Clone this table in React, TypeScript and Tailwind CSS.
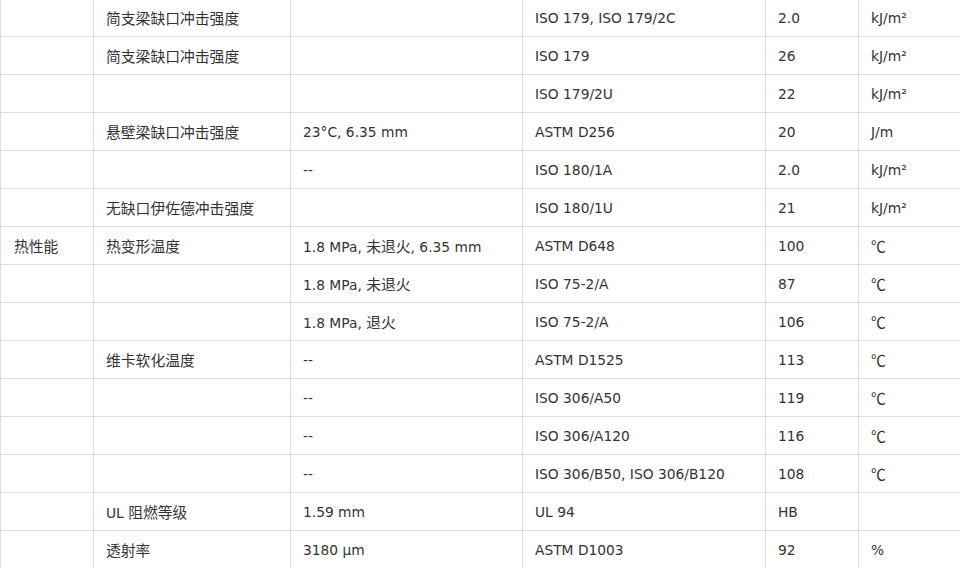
import React from 'react';

const rows: string[][] = [
  ['', '简支梁缺口冲击强度', '', 'ISO 179, ISO 179/2C', '2.0', 'kJ/m²'],
  ['', '简支梁缺口冲击强度', '', 'ISO 179', '26', 'kJ/m²'],
  ['', '', '', 'ISO 179/2U', '22', 'kJ/m²'],
  ['', '悬壁梁缺口冲击强度', '23°C, 6.35 mm', 'ASTM D256', '20', 'J/m'],
  ['', '', '--', 'ISO 180/1A', '2.0', 'kJ/m²'],
  ['', '无缺口伊佐德冲击强度', '', 'ISO 180/1U', '21', 'kJ/m²'],
  ['热性能', '热变形温度', '1.8 MPa, 未退火, 6.35 mm', 'ASTM D648', '100', '℃'],
  ['', '', '1.8 MPa, 未退火', 'ISO 75-2/A', '87', '℃'],
  ['', '', '1.8 MPa, 退火', 'ISO 75-2/A', '106', '℃'],
  ['', '维卡软化温度', '--', 'ASTM D1525', '113', '℃'],
  ['', '', '--', 'ISO 306/A50', '119', '℃'],
  ['', '', '--', 'ISO 306/A120', '116', '℃'],
  ['', '', '--', 'ISO 306/B50, ISO 306/B120', '108', '℃'],
  ['', 'UL 阻燃等级', '1.59 mm', 'UL 94', 'HB', ''],
  ['', '透射率', '3180 µm', 'ASTM D1003', '92', '%'],
];

// CJK runs get the CJK face and a slightly bigger size, as in the reference
function Mixed({ text }: { text: string }) {
  const parts = text.split(/([\u3400-\u9fff\u2103]+)/).filter(Boolean);
  return (
    <span>
      {parts.map((p, i) =>
        /[\u3400-\u9fff\u2103]/.test(p) ? (
          <span key={i} className="text-[14.8px] font-['Noto_Sans_CJK_SC',sans-serif]">{p}</span>
        ) : (
          <span key={i}>{p}</span>
        )
      )}
    </span>
  );
}

export default function App() {
  return (
    <div className="w-[960px] h-[568px] overflow-hidden bg-white">
      <div
        className="-mt-px grid w-[1000px] grid-cols-[93px_197px_232px_243px_93px_140px] border-l border-[#dedede] text-[13.8px] text-[#333]"
        style={{ fontFamily: '"DejaVu Sans", "Noto Sans CJK SC", sans-serif' }}
      >
        {rows.map((row, r) =>
          row.map((cell, c) => (
            <div
              key={`${r}-${c}`}
              className={`flex h-[38px] items-center border-r border-b border-[#dedede] pt-px whitespace-pre ${c === 0 ? 'pl-[13px]' : 'pl-3'}`}
            >
              <Mixed text={cell} />
            </div>
          ))
        )}
      </div>
    </div>
  );
}
